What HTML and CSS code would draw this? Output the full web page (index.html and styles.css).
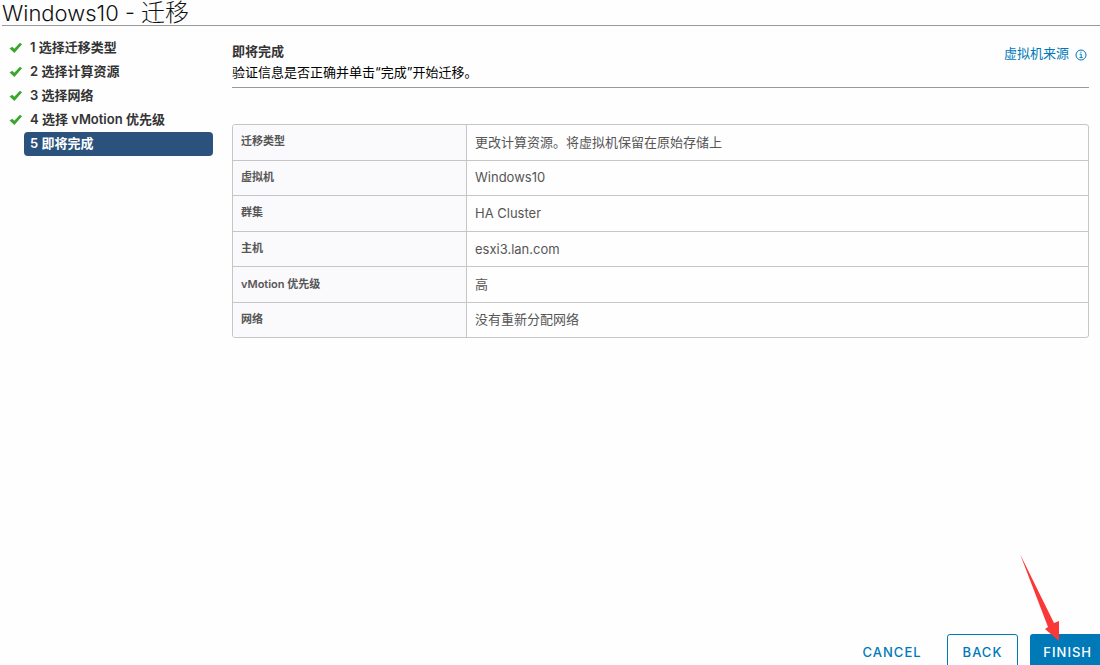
FILE: index.html
```html
<!DOCTYPE html>
<html lang="zh-CN">
<head>
<meta charset="utf-8">
<title>Windows10 - 迁移</title>
<link rel="stylesheet" href="styles.css">
</head>
<body>
<div class="wizard">
  <header class="wizard-header"><h1 class="wizard-title">Windows10 - <span class="wizard-action">迁移</span></h1></header>
  <div class="wizard-body">
    <nav class="wizard-nav">
      <ol class="steps">
        <li class="step"><svg class="check" viewBox="0 0 14 12" aria-hidden="true"><path d="M.6 6.6 3.2 4.8 5.3 6.8 11 .8 13 2.2 5.4 11z"/></svg><span class="step-label">1 选择迁移类型</span></li>
        <li class="step"><svg class="check" viewBox="0 0 14 12" aria-hidden="true"><path d="M.6 6.6 3.2 4.8 5.3 6.8 11 .8 13 2.2 5.4 11z"/></svg><span class="step-label">2 选择计算资源</span></li>
        <li class="step"><svg class="check" viewBox="0 0 14 12" aria-hidden="true"><path d="M.6 6.6 3.2 4.8 5.3 6.8 11 .8 13 2.2 5.4 11z"/></svg><span class="step-label">3 选择网络</span></li>
        <li class="step"><svg class="check" viewBox="0 0 14 12" aria-hidden="true"><path d="M.6 6.6 3.2 4.8 5.3 6.8 11 .8 13 2.2 5.4 11z"/></svg><span class="step-label">4 选择 vMotion 优先级</span></li>
        <li class="step" aria-current="step"><span class="step-label step-current">5 即将完成</span></li>
      </ol>
    </nav>
    <main class="content">
      <div class="content-header">
        <div class="intro">
          <h2 class="content-title">即将完成</h2>
          <p class="content-text">验证信息是否正确并单击“完成”开始迁移。</p>
        </div>
        <a class="origin" href="#">虚拟机来源
          <svg class="info" viewBox="0 0 12 12" aria-hidden="true"><circle cx="6" cy="6" r="5"/><path d="M4.7 5.2H6.2V8.6M4.5 8.6H7.7M5.4 3.2H6.6"/></svg>
        </a>
      </div>
      <table class="summary">
        <tbody>
          <tr><th scope="row">迁移类型</th><td>更改计算资源。将虚拟机保留在原始存储上</td></tr>
          <tr><th scope="row">虚拟机</th><td>Windows10</td></tr>
          <tr><th scope="row">群集</th><td>HA Cluster</td></tr>
          <tr><th scope="row">主机</th><td>esxi3.lan.com</td></tr>
          <tr><th scope="row">vMotion 优先级</th><td>高</td></tr>
          <tr><th scope="row">网络</th><td>没有重新分配网络</td></tr>
        </tbody>
      </table>
    </main>
  </div>
  <footer class="wizard-footer">
    <button class="btn btn-link" type="button">CANCEL</button>
    <button class="btn btn-outline" type="button">BACK</button>
    <button class="btn btn-primary" type="button">FINISH</button>
    <svg class="arrow" viewBox="0 0 40 88" aria-hidden="true"><path d="M0 0 34 69 39 67 39 87 25 75 28 73z"/></svg>
  </footer>
</div>
</body>
</html>
```
FILE: styles.css
```css
* { box-sizing: border-box; }

body {
  margin: 0;
  background: #fefefe;
  color: #333;
  font-family: "Inter", "Noto Sans CJK SC", sans-serif;
  font-size: 13px;
  line-height: 20px;
}

.wizard {
  display: flex;
  flex-direction: column;
  height: 100vh;
  overflow: hidden;
}

.wizard-header {
  margin-left: 2px;
  border-bottom: 1px solid #9a9a9a;
}

.wizard-title {
  height: 25px;
  margin: 0;
  color: #111;
  font-size: 22px;
  font-weight: 300;
  line-height: 25px;
}

.wizard-action { font-size: 24px; }

.wizard-body {
  display: flex;
  flex: 1;
  gap: 19px;
  padding-right: 11px;
}

.wizard-nav {
  flex: 0 0 213px;
  padding-top: 10px;
}

.steps {
  margin: 0;
  padding: 0;
  list-style: none;
}

.step {
  display: grid;
  grid-template-columns: 24px 1fr;
  align-items: center;
  height: 24px;
  color: #333;
  font-weight: 600;
}

.check {
  width: 14px;
  height: 12px;
  margin-left: 9px;
  fill: #3aa52c;
}

.step-label {
  grid-column: 2;
  padding: 1px 6px 3px;
}

.step-current {
  border-radius: 4px;
  background: #2a527d;
  color: #fff;
}

.content {
  flex: 1;
  min-width: 0;
}

.content-header {
  display: flex;
  justify-content: space-between;
  padding: 15px 0 5px;
  border-bottom: 1px solid #999;
}

.content-title {
  margin: 0;
  font-size: 13px;
  font-weight: 700;
  line-height: 21px;
}

.content-text {
  margin: 0;
  color: #000;
  line-height: 20px;
}

.origin {
  display: flex;
  align-items: center;
  gap: 6px;
  height: 23px;
  padding-right: 2px;
  color: #0079b8;
  text-decoration: none;
}

.info {
  width: 12px;
  height: 12px;
  margin-top: 4px;
  fill: none;
  stroke: #0079b8;
  stroke-width: 1;
}

.summary {
  width: 100%;
  height: 214px;
  margin-top: 36px;
  border: 1px solid #c6c6c6;
  border-radius: 3px;
  border-spacing: 0;
  overflow: hidden;
}

.summary th,
.summary td {
  padding: 0 8px 1px;
  border-bottom: 1px solid #c6c6c6;
  color: #565656;
  text-align: left;
}

.summary th {
  width: 234px;
  padding-bottom: 2px;
  border-right: 1px solid #c6c6c6;
  background: #faf9fc;
  font-size: 11px;
  font-weight: 600;
}

.summary tr:last-child > * { border-bottom: 0; }

.wizard-footer {
  position: relative;
  display: flex;
  justify-content: flex-end;
  gap: 12px;
  margin: 0 -5px -5px 0;
}

.btn {
  height: 36px;
  padding: 0 15px;
  border: 1px solid transparent;
  border-radius: 3px;
  background: transparent;
  color: #0079b8;
  font-family: inherit;
  font-size: 13px;
  font-weight: 500;
  letter-spacing: 1px;
}

.btn-link { padding: 0 12px; }

.btn-outline { border-color: #0079b8; }

.btn-primary {
  padding: 0 12px;
  background: #0079b8;
  color: #fff;
}

.arrow {
  position: absolute;
  right: 45px;
  bottom: 28px;
  width: 40px;
  height: 88px;
  fill: #fb3838;
}
```
